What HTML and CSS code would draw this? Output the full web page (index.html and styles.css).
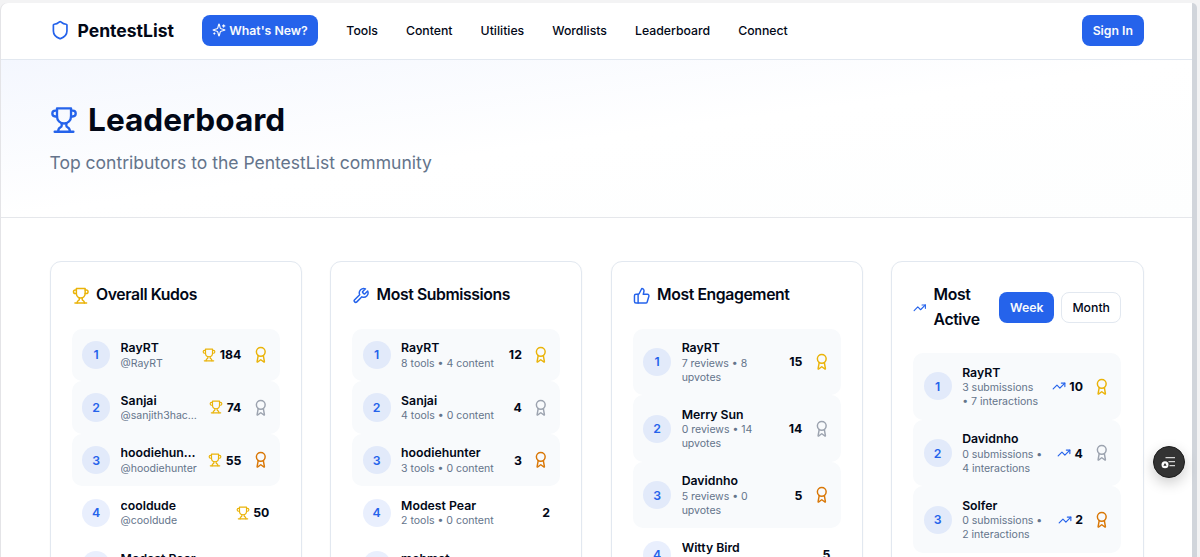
FILE: index.html
```html
<!DOCTYPE html>
<html lang="en">
<head>
    <meta charset="UTF-8">
    <meta name="viewport" content="width=device-width, initial-scale=1.0">
    <title>Leaderboard - PentestList</title>
    <link rel="stylesheet" href="styles.css">
</head>
<body>
    <svg class="sprite">
        <symbol id="shield" viewBox="0 0 24 24"><path d="M20 13c0 5-3.5 7.5-7.66 8.95a1 1 0 0 1-.67-.01C7.5 20.5 4 18 4 13V6a1 1 0 0 1 1-1c2 0 4.5-1.2 6.24-2.72a1.17 1.17 0 0 1 1.52 0C14.51 3.81 17 5 19 5a1 1 0 0 1 1 1z"/></symbol>
        <symbol id="sparkles" viewBox="0 0 24 24"><path d="M9.937 15.5A2 2 0 0 0 8.5 14.063l-6.135-1.582a.5.5 0 0 1 0-.962L8.5 9.936A2 2 0 0 0 9.937 8.5l1.582-6.135a.5.5 0 0 1 .963 0L14.063 8.5A2 2 0 0 0 15.5 9.937l6.135 1.581a.5.5 0 0 1 0 .964L15.5 14.063a2 2 0 0 0-1.437 1.437l-1.582 6.135a.5.5 0 0 1-.963 0z"/><path d="M20 3v4M22 5h-4M4 17v2M5 18H3"/></symbol>
        <symbol id="trophy" viewBox="0 0 24 24"><path d="M6 9H4.5a2.5 2.5 0 0 1 0-5H6"/><path d="M18 9h1.5a2.5 2.5 0 0 0 0-5H18"/><path d="M4 22h16"/><path d="M10 14.66V17c0 .55-.47.98-.97 1.21C7.85 18.75 7 20.24 7 22"/><path d="M14 14.66V17c0 .55.47.98.97 1.21C16.15 18.75 17 20.24 17 22"/><path d="M18 2H6v7a6 6 0 0 0 12 0V2Z"/></symbol>
        <symbol id="award" viewBox="0 0 24 24"><path d="m15.477 12.89 1.515 8.526a.5.5 0 0 1-.81.47l-3.58-2.687a1 1 0 0 0-1.197 0l-3.586 2.686a.5.5 0 0 1-.81-.469l1.514-8.526"/><circle cx="12" cy="8" r="6"/></symbol>
        <symbol id="wrench" viewBox="0 0 24 24"><path d="M14.7 6.3a1 1 0 0 0 0 1.4l1.6 1.6a1 1 0 0 0 1.4 0l3.77-3.77a6 6 0 0 1-7.94 7.94l-6.91 6.91a2.12 2.12 0 0 1-3-3l6.91-6.91a6 6 0 0 1 7.94-7.94l-3.76 3.76z"/></symbol>
        <symbol id="thumbs-up" viewBox="0 0 24 24"><path d="M7 10v12"/><path d="M15 5.88 14 10h5.83a2 2 0 0 1 1.92 2.56l-2.33 8A2 2 0 0 1 17.5 22H4a2 2 0 0 1-2-2v-8a2 2 0 0 1 2-2h2.76a2 2 0 0 0 1.79-1.11L12 2a3.13 3.13 0 0 1 3 3.88Z"/></symbol>
        <symbol id="trending" viewBox="0 0 24 24"><path d="M22 7l-8.500 8.500-5-5L2 17"/><path d="M16 7h6v6"/></symbol>
    </svg>

    <div class="page">
        <header class="header">
            <div class="container header-inner">
                <a class="logo"><svg class="icon"><use href="#shield"/></svg>PentestList</a>
                <nav class="nav">
                    <a class="btn btn-primary btn-new"><svg class="icon"><use href="#sparkles"/></svg>What's New?</a>
                    <a>Tools</a>
                    <a>Content</a>
                    <a>Utilities</a>
                    <a>Wordlists</a>
                    <a>Leaderboard</a>
                    <a>Connect</a>
                </nav>
                <button class="btn btn-primary">Sign In</button>
            </div>
        </header>

        <section class="hero">
            <div class="container">
                <h1><svg class="icon"><use href="#trophy"/></svg>Leaderboard</h1>
                <p>Top contributors to the PentestList community</p>
            </div>
        </section>

        <main class="container boards">
            <section class="card">
                <div class="card-header">
                    <h2><svg class="icon gold"><use href="#trophy"/></svg>Overall Kudos</h2>
                </div>
                <div class="row top">
                    <span class="rank">1</span>
                    <div class="user"><div class="name">RayRT</div><div class="meta">@RayRT</div></div>
                    <span class="score"><svg class="icon gold"><use href="#trophy"/></svg>184</span>
                    <svg class="icon medal gold"><use href="#award"/></svg>
                </div>
                <div class="row top">
                    <span class="rank">2</span>
                    <div class="user"><div class="name">Sanjai</div><div class="meta cut">@sanjith3hacker</div></div>
                    <span class="score"><svg class="icon gold"><use href="#trophy"/></svg>74</span>
                    <svg class="icon medal silver"><use href="#award"/></svg>
                </div>
                <div class="row top">
                    <span class="rank">3</span>
                    <div class="user"><div class="name">hoodiehunter</div><div class="meta cut">@hoodiehunter</div></div>
                    <span class="score"><svg class="icon gold"><use href="#trophy"/></svg>55</span>
                    <svg class="icon medal bronze"><use href="#award"/></svg>
                </div>
                <div class="row">
                    <span class="rank">4</span>
                    <div class="user"><div class="name">cooldude</div><div class="meta">@cooldude</div></div>
                    <span class="score"><svg class="icon gold"><use href="#trophy"/></svg>50</span>
                </div>
                <div class="row">
                    <span class="rank">5</span>
                    <div class="user"><div class="name">Modest Pear</div></div>
                </div>
            </section>

            <section class="card">
                <div class="card-header">
                    <h2><svg class="icon blue"><use href="#wrench"/></svg>Most Submissions</h2>
                </div>
                <div class="row top">
                    <span class="rank">1</span>
                    <div class="user"><div class="name">RayRT</div><div class="meta">8 tools • 4 content</div></div>
                    <span class="score">12</span>
                    <svg class="icon medal gold"><use href="#award"/></svg>
                </div>
                <div class="row top">
                    <span class="rank">2</span>
                    <div class="user"><div class="name">Sanjai</div><div class="meta">4 tools • 0 content</div></div>
                    <span class="score">4</span>
                    <svg class="icon medal silver"><use href="#award"/></svg>
                </div>
                <div class="row top">
                    <span class="rank">3</span>
                    <div class="user"><div class="name">hoodiehunter</div><div class="meta">3 tools • 0 content</div></div>
                    <span class="score">3</span>
                    <svg class="icon medal bronze"><use href="#award"/></svg>
                </div>
                <div class="row">
                    <span class="rank">4</span>
                    <div class="user"><div class="name">Modest Pear</div><div class="meta">2 tools • 0 content</div></div>
                    <span class="score">2</span>
                </div>
                <div class="row">
                    <span class="rank">5</span>
                    <div class="user"><div class="name">mehmet</div></div>
                </div>
            </section>

            <section class="card">
                <div class="card-header">
                    <h2><svg class="icon blue"><use href="#thumbs-up"/></svg>Most Engagement</h2>
                </div>
                <div class="row top">
                    <span class="rank">1</span>
                    <div class="user"><div class="name">RayRT</div><div class="meta">7 reviews • 8<br>upvotes</div></div>
                    <span class="score">15</span>
                    <svg class="icon medal gold"><use href="#award"/></svg>
                </div>
                <div class="row top">
                    <span class="rank">2</span>
                    <div class="user"><div class="name">Merry Sun</div><div class="meta">0 reviews • 14<br>upvotes</div></div>
                    <span class="score">14</span>
                    <svg class="icon medal silver"><use href="#award"/></svg>
                </div>
                <div class="row top">
                    <span class="rank">3</span>
                    <div class="user"><div class="name">Davidnho</div><div class="meta">5 reviews • 0<br>upvotes</div></div>
                    <span class="score">5</span>
                    <svg class="icon medal bronze"><use href="#award"/></svg>
                </div>
                <div class="row">
                    <span class="rank">4</span>
                    <div class="user"><div class="name">Witty Bird</div></div>
                    <span class="score">5</span>
                </div>
            </section>

            <section class="card">
                <div class="card-header">
                    <h2 class="narrow"><svg class="icon blue"><use href="#trending"/></svg>Most<br>Active</h2>
                    <div class="period">
                        <button class="btn btn-primary">Week</button>
                        <button class="btn btn-outline">Month</button>
                    </div>
                </div>
                <div class="row top">
                    <span class="rank">1</span>
                    <div class="user"><div class="name">RayRT</div><div class="meta">3 submissions<br>• 7 interactions</div></div>
                    <span class="score"><svg class="icon blue"><use href="#trending"/></svg>10</span>
                    <svg class="icon medal gold"><use href="#award"/></svg>
                </div>
                <div class="row top">
                    <span class="rank">2</span>
                    <div class="user"><div class="name">Davidnho</div><div class="meta">0 submissions •<br>4 interactions</div></div>
                    <span class="score"><svg class="icon blue"><use href="#trending"/></svg>4</span>
                    <svg class="icon medal silver"><use href="#award"/></svg>
                </div>
                <div class="row top">
                    <span class="rank">3</span>
                    <div class="user"><div class="name">Solfer</div><div class="meta">0 submissions •<br>2 interactions</div></div>
                    <span class="score"><svg class="icon blue"><use href="#trending"/></svg>2</span>
                    <svg class="icon medal bronze"><use href="#award"/></svg>
                </div>
            </section>
        </main>
    </div>

    <div class="fab">
        <svg viewBox="0 0 16 16">
            <path d="M4.500 3.700h9.500M7.500 7.700h6.500M8.500 11.700h5.500" stroke="#d4d4d4" stroke-width="1.200"/>
            <circle cx="4" cy="10.700" r="3.500" fill="#fff"/>
            <path d="M4 8.900l1.600 2.900H2.400z" fill="#222"/>
        </svg>
    </div>
</body>
</html>
```
FILE: styles.css
```css
* {
    box-sizing: border-box;
}
html {
    font-size: 14.03px;
}
body {
    margin: 0;
    height: 557px;
    overflow: hidden;
    background: #f3f3f4;
    padding: 3px 3px 0 1px;
    font-family: Inter, "Liberation Sans", sans-serif;
    color: #020817;
}
.sprite {
    display: none;
}
.icon {
    fill: none;
    stroke: currentColor;
    stroke-width: 2;
    stroke-linecap: round;
    stroke-linejoin: round;
    flex-shrink: 0;
    width: 1.25rem;
    height: 1.25rem;
}
.page {
    height: 554px;
    overflow: hidden;
    background: #fff;
    border-right: 5px solid #d1d5db;
    border-radius: 7px 5px 0 0;
    box-shadow: -1px 0 0 #e4e4e7;
}
.container {
    width: 1094px;
    margin: 0 auto;
}
.header {
    height: 57px;
    border-bottom: 1px solid #e2e8f0;
}
.header-inner {
    display: flex;
    align-items: center;
    height: 55px;
}
.logo {
    display: flex;
    align-items: center;
    gap: 0.55rem;
    font-size: 1.25rem;
    font-weight: 700;
}
.logo .icon {
    width: 1.45rem;
    height: 1.45rem;
    color: #2563eb;
}
.nav {
    display: flex;
    align-items: center;
    gap: 2rem;
    margin: 0 auto 0 2rem;
    font-size: 0.875rem;
    font-weight: 500;
}
.btn {
    display: flex;
    align-items: center;
    height: 2.25rem;
    padding: 0 0.75rem;
    border: 0;
    border-radius: 8px;
    font-family: inherit;
    font-size: 0.875rem;
    font-weight: 500;
}
.btn-primary {
    background: #2563eb;
    color: #f8fafc;
    font-weight: 600;
}
.btn-outline {
    background: #fff;
    border: 1px solid #e2e8f0;
    color: #020817;
}
.btn-new {
    gap: 0.2rem;
}
.btn-new .icon {
    width: 1rem;
    height: 1rem;
}
.hero {
    height: 158px;
    padding: 3rem 0;
    border-bottom: 1px solid #e5e7eb;
    background: linear-gradient(to bottom right, #f4f7fe, #fff 50%, #fdfefe);
}
.hero h1 {
    display: flex;
    align-items: center;
    gap: 0.75rem;
    margin: 0 0 1rem;
    font-size: 2.25rem;
    line-height: 2.5rem;
    font-weight: 700;
}
.hero h1 .icon {
    width: 2rem;
    height: 2rem;
    color: #2563eb;
}
.hero p {
    margin: 0;
    font-size: 1.25rem;
    line-height: 1.75rem;
    color: #64748b;
}
.boards {
    display: grid;
    grid-template-columns: repeat(4, minmax(0, 1fr));
    gap: 2rem;
    padding-top: 43px;
}
.card {
    height: 700px;
    padding: 1.5rem;
    border: 1px solid #e2e8f0;
    border-radius: 11px;
    box-shadow: 0 1px 2px rgba(0, 0, 0, 0.05);
}
.card-header {
    display: flex;
    justify-content: space-between;
    align-items: center;
    margin-bottom: 1.5rem;
}
.card h2 {
    display: flex;
    align-items: center;
    gap: 0.5rem;
    margin: 0;
    font-size: 1.125rem;
    line-height: 1.75rem;
    font-weight: 600;
    letter-spacing: -0.025em;
}
.card h2.narrow .icon {
    width: 13.5px;
}
.period {
    display: flex;
    gap: 0.5rem;
}
.row {
    display: flex;
    align-items: center;
    gap: 0.75rem;
    padding: 0.75rem;
    border-radius: 10px;
}
.top {
    background: #f8fafc;
}
.rank {
    display: flex;
    align-items: center;
    justify-content: center;
    flex-shrink: 0;
    width: 2rem;
    height: 2rem;
    border-radius: 50%;
    background: rgba(37, 99, 235, 0.1);
    color: #2563eb;
    font-size: 0.875rem;
    font-weight: 600;
}
.user {
    flex: 1;
    min-width: 0;
    min-height: 2.25rem;
}
.name {
    overflow: hidden;
    text-overflow: ellipsis;
    white-space: nowrap;
    font-size: 0.875rem;
    line-height: 1.25rem;
    font-weight: 600;
}
.meta {
    font-size: 0.75rem;
    line-height: 1rem;
    color: #64748b;
}
.cut {
    overflow: hidden;
    text-overflow: ellipsis;
    white-space: nowrap;
}
.score {
    display: flex;
    align-items: center;
    gap: 0.25rem;
    font-size: 0.875rem;
    font-weight: 700;
}
.score .icon {
    width: 1rem;
    height: 1rem;
}
.gold {
    color: #eab308;
}
.silver {
    color: #9ca3af;
}
.bronze {
    color: #d97706;
}
.blue {
    color: #2563eb;
}
.fab {
    position: fixed;
    left: 1153px;
    top: 446px;
    display: flex;
    align-items: center;
    justify-content: center;
    width: 32px;
    height: 32px;
    border: 1px solid #1c1c1c;
    border-radius: 50%;
    background: #333;
    box-shadow: 0 5px 14px rgba(0, 0, 0, 0.2);
}
.fab svg {
    width: 16px;
    height: 16px;
}
```
